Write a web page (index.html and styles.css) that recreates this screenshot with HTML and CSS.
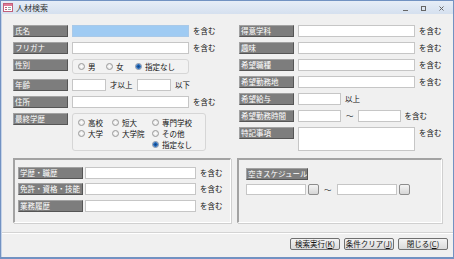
FILE: index.html
```html
<!DOCTYPE html>
<html lang="ja">
<head>
    <meta charset="UTF-8">
    <title>人材検索</title>
    <link rel="stylesheet" href="styles.css">
</head>
<body>
<div class="window">
    <div class="titlebar">
        <svg class="appIcon" width="10" height="9" viewBox="0 0 10 9">
            <rect x="0.5" y="0.5" width="9" height="8" fill="#fff" stroke="#c0607a"/>
            <rect x="1" y="1" width="8" height="2" fill="#e07a96"/>
            <rect x="2" y="4" width="2" height="1" fill="#c0607a"/>
            <rect x="2" y="6" width="2" height="1" fill="#c0607a"/>
            <rect x="5" y="4" width="3" height="1" fill="#9aa"/>
            <rect x="5" y="6" width="3" height="1" fill="#9aa"/>
        </svg>
        <span class="title">人材検索</span>
        <div class="controls">
            <svg width="7" height="7" viewBox="0 0 7 7"><rect x="1" y="5" width="5" height="1" fill="#666"/></svg>
            <svg width="7" height="7" viewBox="0 0 7 7"><rect x="1.5" y="1.5" width="4" height="4" fill="none" stroke="#666"/><rect x="1" y="1" width="5" height="1" fill="#666"/></svg>
            <svg width="7" height="7" viewBox="0 0 7 7"><path d="M1.5 1.5 L5.5 5.5 M5.5 1.5 L1.5 5.5" stroke="#666" stroke-width="1"/></svg>
        </div>
    </div>

    <div class="client">
        <div class="form">
            <div class="col colLeft">
                <div class="row">
                    <div class="lbl">氏名</div>
                    <div class="fld wide focus"></div>
                    <span class="note">を含む</span>
                </div>
                <div class="row">
                    <div class="lbl">フリガナ</div>
                    <div class="fld wide"></div>
                    <span class="note">を含む</span>
                </div>
                <div class="row rowSex">
                    <div class="lbl">性別</div>
                    <div class="rgroup sexGroup">
                        <span class="opt"><i class="radio"></i>男</span>
                        <span class="opt"><i class="radio"></i>女</span>
                        <span class="opt"><i class="radio on"></i>指定なし</span>
                    </div>
                </div>
                <div class="row">
                    <div class="lbl">年齢</div>
                    <div class="fld age"></div>
                    <span class="unit">才以上</span>
                    <div class="fld age"></div>
                    <span class="unit">以下</span>
                </div>
                <div class="row">
                    <div class="lbl">住所</div>
                    <div class="fld wide"></div>
                    <span class="note">を含む</span>
                </div>
                <div class="row rowEdu">
                    <div class="lbl">最終学歴</div>
                    <div class="rgroup eduGroup">
                        <span class="opt"><i class="radio"></i>高校</span>
                        <span class="opt"><i class="radio"></i>短大</span>
                        <span class="opt"><i class="radio"></i>専門学校</span>
                        <span class="opt"><i class="radio"></i>大学</span>
                        <span class="opt"><i class="radio"></i>大学院</span>
                        <span class="opt"><i class="radio"></i>その他</span>
                        <span class="opt col3"><i class="radio on"></i>指定なし</span>
                    </div>
                </div>
            </div>

            <div class="col colRight">
                <div class="row">
                    <div class="lbl">得意学科</div>
                    <div class="fld wide"></div>
                    <span class="note">を含む</span>
                </div>
                <div class="row">
                    <div class="lbl">趣味</div>
                    <div class="fld wide"></div>
                    <span class="note">を含む</span>
                </div>
                <div class="row">
                    <div class="lbl">希望職種</div>
                    <div class="fld wide"></div>
                    <span class="note">を含む</span>
                </div>
                <div class="row">
                    <div class="lbl">希望勤務地</div>
                    <div class="fld wide"></div>
                    <span class="note">を含む</span>
                </div>
                <div class="row">
                    <div class="lbl">希望給与</div>
                    <div class="fld short"></div>
                    <span class="unit">以上</span>
                </div>
                <div class="row">
                    <div class="lbl">希望勤務時間</div>
                    <div class="fld short"></div>
                    <span class="tilde">～</span>
                    <div class="fld short"></div>
                    <span class="note">を含む</span>
                </div>
                <div class="row rowMemo">
                    <div class="lbl">特記事項</div>
                    <div class="fld wide memo"></div>
                    <span class="note">を含む</span>
                </div>
            </div>
        </div>

        <div class="frames">
            <div class="frame frameLeft">
                <div class="row">
                    <div class="lbl lblWide">学歴・職歴</div>
                    <div class="fld mid"></div>
                    <span class="note">を含む</span>
                </div>
                <div class="row">
                    <div class="lbl lblWide">免許・資格・技能</div>
                    <div class="fld mid"></div>
                    <span class="note">を含む</span>
                </div>
                <div class="row">
                    <div class="lbl lblWide">業務履歴</div>
                    <div class="fld mid"></div>
                    <span class="note">を含む</span>
                </div>
            </div>
            <div class="frame frameRight">
                <div class="lbl lblSched">空きスケジュール</div>
                <div class="row schedRow">
                    <div class="fld date"></div>
                    <div class="pick"></div>
                    <span class="tilde">～</span>
                    <div class="fld date"></div>
                    <div class="pick"></div>
                </div>
            </div>
        </div>

        <div class="footer">
            <button class="btn">検索実行(<u>K</u>)</button>
            <button class="btn">条件クリア(<u>J</u>)</button>
            <button class="btn">閉じる(<u>C</u>)</button>
        </div>
    </div>
</div>
</body>
</html>
```

FILE: styles.css
```css
* {
    box-sizing: border-box;
}

body {
    margin: 0;
    font-family: "Noto Sans CJK JP", "Noto Sans", sans-serif;
    font-size: 7.5px;
    line-height: 10px;
    color: #111;
    background: #fff;
}

.window {
    width: 454px;
    height: 259px;
    border: 1px solid #7292c2;
    border-bottom-width: 2px;
    display: flex;
    flex-direction: column;
    background: #f0f0f0;
}

/* title bar */
.titlebar {
    height: 13px;
    display: flex;
    align-items: center;
    padding-left: 2px;
    background: linear-gradient(#e6edf7, #d5e0ef);
}

.appIcon {
    display: block;
}

.title {
    margin-left: 3px;
    color: #333;
    font-size: 8px;
    line-height: 13px;
}

.controls {
    margin-left: auto;
    display: flex;
    gap: 11px;
    padding-right: 8px;
    padding-top: 2px;
}

.controls svg {
    display: block;
}

/* client area */
.client {
    flex: 1;
    display: flex;
    flex-direction: column;
    border-left: 1px solid #c5d3e8;
}

.form {
    display: flex;
    padding: 11px 0 0 11px;
}

.col {
    display: flex;
    flex-direction: column;
    gap: 5px;
}

.colLeft {
    width: 226px;
}

.row {
    display: flex;
    align-items: center;
    height: 12px;
}

.rowSex {
    height: 15px;
    align-items: flex-start;
}

.rowEdu {
    height: 38px;
    align-items: flex-start;
}

.rowMemo {
    height: 24px;
    align-items: flex-start;
}

.lbl {
    width: 55px;
    height: 12px;
    flex: none;
    background: #7d7d7d;
    color: #fff;
    line-height: 10px;
    padding-left: 1px;
    border: 1px solid;
    border-color: #a2a2a2 #555 #555 #a2a2a2;
    white-space: nowrap;
    overflow: hidden;
}

.fld {
    height: 12px;
    flex: none;
    background: #fff;
    border: 1px solid #c6c6c6;
    margin-left: 4px;
}

.fld.focus {
    background: #9fcbf3;
    border-color: #a9c9e8;
}

.wide {
    width: 117px;
}

.memo {
    height: 24px;
}

.age {
    width: 34px;
}

.short {
    width: 43px;
}

.mid {
    width: 111px;
    margin-left: 2px;
}

.date {
    width: 60px;
    margin-left: 0;
}

.note {
    margin-left: 4px;
    white-space: nowrap;
}

.rowMemo .note {
    margin-top: 1px;
}

.unit {
    margin-left: 4px;
    width: 23px;
    white-space: nowrap;
}

.tilde {
    margin: 0 0 0 5px;
}

/* radio groups */
.rgroup {
    margin-left: 4px;
    border: 1px solid #d6d6d6;
    border-radius: 3px;
    background: #f2f2f2;
}

.sexGroup {
    width: 117px;
    height: 15px;
    display: flex;
    align-items: center;
    padding-left: 5px;
}

.sexGroup .opt:nth-child(1) {
    width: 28px;
}

.sexGroup .opt:nth-child(2) {
    width: 29px;
}

.eduGroup {
    width: 134px;
    height: 38px;
    display: grid;
    grid-template-columns: 34px 40px auto;
    grid-auto-rows: 11px;
    padding: 3px 0 0 5px;
}

.eduGroup .col3 {
    grid-column: 3;
}

.opt {
    display: flex;
    align-items: center;
    height: 11px;
    white-space: nowrap;
}

.radio {
    width: 7px;
    height: 7px;
    border-radius: 50%;
    border: 1px solid #9a9a9a;
    background: radial-gradient(#fff, #dcdcdc);
    margin-right: 3px;
    flex: none;
}

.radio.on {
    background: radial-gradient(#0c3f80 0, #2b72c4 2px, #dfe8f3 3px);
    border-color: #7f8fa5;
}

/* frames */
.frames {
    display: flex;
    gap: 6px;
    margin: 7px 0 0 11px;
}

.frame {
    height: 65px;
    border-style: solid;
    border-width: 2px 1px 1px 2px;
    border-color: #a3a3a3 #fff #fff #a3a3a3;
    box-shadow: 1px 1px 0 #d0d0d0;
}

.frameLeft {
    width: 218px;
    padding: 7px 0 0 3px;
    display: flex;
    flex-direction: column;
    gap: 4px;
}

.frameLeft .row:nth-child(3) {
    margin-top: 1px;
}

.lblWide {
    width: 65px;
}

.frameRight {
    width: 205px;
    padding: 8px 0 0 7px;
}

.lblSched {
    width: 62px;
}

.schedRow {
    margin-top: 4px;
    height: 11px;
}

.schedRow .fld {
    height: 11px;
}

.schedRow .tilde {
    margin: 0 5px;
}

.pick {
    width: 11px;
    height: 11px;
    margin-left: 2px;
    border: 1px solid #8c8c8c;
    border-radius: 2px;
    background: linear-gradient(#f4f4f4, #d6d6d6);
}

/* footer */
.footer {
    margin-top: 9px;
    border-top: 1px solid #d4d4d4;
    box-shadow: inset 0 1px 0 #fff;
    flex: 1;
    display: flex;
    justify-content: flex-end;
    align-items: flex-start;
    gap: 4px;
    padding: 5px 5px 0 0;
}

.btn {
    width: 50px;
    height: 12px;
    padding: 0;
    font-family: inherit;
    font-size: 7.5px;
    line-height: 10px;
    color: #111;
    border: 1px solid #707070;
    border-radius: 2px;
    background: linear-gradient(#f3f3f3, #dadada);
    white-space: nowrap;
}
```
